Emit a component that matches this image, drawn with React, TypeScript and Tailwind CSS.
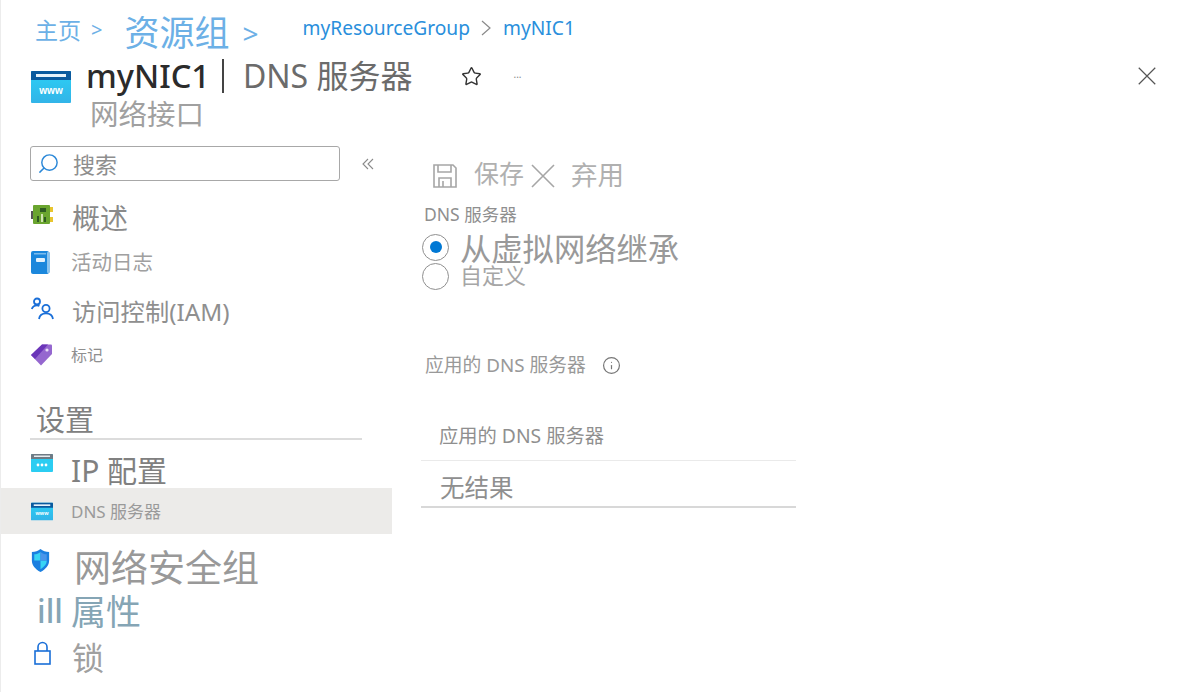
import { Info, Search, Star } from 'lucide-react'

const font = "font-['Noto_Sans','Noto_Sans_CJK_SC',sans-serif]"

function WwwIcon({ className }: { className: string }) {
  return (
    <svg className={className} viewBox="0 0 40 32">
      <defs>
        <linearGradient id="www" x1="0" y1="0" x2="0" y2="1">
          <stop offset="0" stopColor="#2bd0f5" />
          <stop offset="1" stopColor="#32b4e8" />
        </linearGradient>
      </defs>
      <rect width="40" height="32" rx="1" fill="url(#www)" />
      <path d="M0 1a1 1 0 0 1 1-1h38a1 1 0 0 1 1 1v8H0z" fill="#0a5a9e" />
      <rect x="5" y="3" width="30" height="3" fill="#e6f2fa" />
      <text x="20" y="23" textAnchor="middle" fontSize="10" fontWeight="600" fill="#fff" fontFamily="Liberation Sans">www</text>
    </svg>
  )
}

function IpIcon() {
  return (
    <svg className="w-[22px] h-[18px] mb-[16px]" viewBox="0 0 22 18">
      <rect width="22" height="18" rx="1" fill="#2bcdf2" />
      <path d="M0 1a1 1 0 0 1 1-1h20a1 1 0 0 1 1 1v4H0z" fill="#6f7b85" />
      <rect x="3" y="1.5" width="16" height="1.5" fill="#e8edf0" />
      <circle cx="7" cy="11" r="1.4" fill="#fff" />
      <circle cx="11" cy="11" r="1.4" fill="#fff" />
      <circle cx="15" cy="11" r="1.4" fill="#fff" />
    </svg>
  )
}

function BoardIcon() {
  return (
    <svg className="w-[22px] h-[20px] mb-[6px]" viewBox="0 0 22 20">
      <rect x="0" y="6" width="3" height="8" fill="#555" />
      <rect x="2" y="0" width="17" height="19" rx="1" fill="#6aa52f" />
      <rect x="19" y="2" width="3" height="5" fill="#e8c52e" />
      <rect x="19" y="12" width="3" height="5" fill="#e8c52e" />
      <rect x="9" y="3" width="6" height="4" fill="#2f5b22" />
      <rect x="6" y="11" width="2" height="6" fill="#2f5b22" />
      <rect x="10" y="9" width="2" height="8" fill="#cfe3b0" />
      <rect x="13" y="12" width="2" height="5" fill="#2f5b22" />
    </svg>
  )
}

function BookIcon() {
  return (
    <svg className="w-[20px] h-[23px]" viewBox="0 0 20 23">
      <rect width="18" height="23" rx="2" fill="#1b87dc" />
      <rect x="16" y="1" width="3" height="21" rx="1" fill="#8cc4ee" />
      <rect x="3" y="2" width="12" height="1.5" fill="#7cbcec" />
      <rect x="5" y="7" width="9" height="4" rx="1" fill="#e4f2fc" />
    </svg>
  )
}

function UsersIcon() {
  return (
    <svg className="w-[23px] h-[24px] mb-[6px]" viewBox="0 0 23 23" fill="none" stroke="#1a6fd8" strokeWidth="1.8">
      <circle cx="6" cy="4" r="3" />
      <path d="M0.8 11.5c1-2.6 3-3.6 5.2-3.6 1 0 1.6 0.1 2.4 0.5" />
      <circle cx="15" cy="11" r="3.6" />
      <path d="M8 21.500c0.600-3.600 3.400-5.600 7-5.600s6.400 2 7 5.600" />
    </svg>
  )
}

function TagIcon() {
  return (
    <svg className="w-[21px] h-[22px] mb-[1px]" viewBox="0 0 21 22">
      <path d="M0 11 11 0.5h9a1 1 0 0 1 1 1V10L10 21.5z" fill="#9567cf" />
      <path d="M0 11 11 0.5h6L4 15z" fill="#6a35b8" />
      <circle cx="16" cy="6" r="1.6" fill="#e6dcf5" />
    </svg>
  )
}

function ShieldIcon() {
  return (
    <svg className="w-[19px] h-[23px] mb-[14px]" viewBox="0 0 19 24">
      <path d="M9.500 0c2.500 2 5.500 3 9 3v9c0 5-3.500 9-9 12-5.500-3-9-7-9-12V3c3.500 0 6.500-1 9-3z" fill="#1b7fe0" />
      <path d="M9.500 3v9H3V5.500c2.500 0 4.500-1 6.500-2.500z" fill="#38d4f5" />
      <path d="M9.500 12h6.500c0 4-2.500 6.500-6.500 9z" fill="#38d4f5" />
      <path d="M9.500 3c2 1.500 4 2.500 6.500 2.500V12H9.500z" fill="#4a95ea" />
    </svg>
  )
}

function LockIcon() {
  return (
    <svg className="ml-[3px] w-[17px] h-[24px] mb-[10px]" viewBox="0 0 17 24" fill="none" stroke="#1a6fd8" strokeWidth="1.600">
      <rect x="1" y="10" width="15" height="13" />
      <path d="M4 10V6a4.500 4.500 0 0 1 9 0v4" />
    </svg>
  )
}

function SaveIcon() {
  return (
    <svg className="w-[24px] h-[24px]" viewBox="0 0 24 24" fill="none" stroke="#a6a6a6" strokeWidth="1.6">
      <path d="M1 1h19l3 3v19H1z" />
      <path d="M5 1v7h13V1" />
      <path d="M6 23v-9h12v9" />
      <path d="M10 17v6" />
    </svg>
  )
}

function CloseIcon({ className, color }: { className: string; color: string }) {
  return (
    <svg className={className} viewBox="0 0 24 24" fill="none" stroke={color} strokeWidth="1.600">
      <path d="M1 1l22 22M23 1 1 23" />
    </svg>
  )
}

function Row({ icon, className, children }: { icon: React.ReactNode; className: string; children: React.ReactNode }) {
  return (
    <div className={`flex items-center pl-[30px] ${className}`}>
      <div className="w-[40px] shrink-0 flex items-center">{icon}</div>
      {children}
    </div>
  )
}

function Radio({ checked }: { checked?: boolean }) {
  return (
    <div className="w-[27px] h-[27px] rounded-full border-[1.5px] border-[#8f8f8f] flex items-center justify-center shrink-0">
      {checked && <div className="w-[12px] h-[12px] rounded-full bg-[#0078d4]" />}
    </div>
  )
}

export default function App() {
  return (
    <div className={`w-[1200px] h-[692px] overflow-hidden bg-white border-l border-[#ececec] ${font}`}>
      {/* Breadcrumb */}
      <div className="h-[60px] flex items-center pl-[34px] text-[#6cb0e6]">
        <span className="text-[23px] leading-none">主页</span>
        <span className="ml-[10px] text-[20px] leading-none">&gt;</span>
        <span className="ml-[22px] mt-[5px] text-[35px] leading-none">资源组</span>
        <span className="ml-[13px] mt-[5px] text-[28px] leading-none">&gt;</span>
        <span className="ml-[44px] mb-[4px] text-[19.200px] leading-none text-[#2a8fdc]">myResourceGroup</span>
        <svg className="ml-[11px] mb-[4px] w-[10px] h-[16px]" viewBox="0 0 10 16" fill="none" stroke="#8a8a8a" strokeWidth="1.2">
          <path d="M1 1l8 7-8 7" />
        </svg>
        <span className="ml-[12px] mb-[4px] text-[19.200px] leading-none text-[#2a8fdc]">myNIC1</span>
      </div>

      {/* Title */}
      <div className="flex h-[76px] pl-[30px]">
        <WwwIcon className="w-[40px] h-[32px] mt-[11px] shrink-0" />
        <div className="ml-[15px] flex-1">
          <div className="h-[32px] flex items-center pr-[44px]">
            <span className="text-[32.500px] leading-none font-medium text-[#2b2b2b]">myNIC1</span>
            <div className="ml-[12px] w-[2px] h-[34px] bg-[#444]" />
            <span className="ml-[19px] text-[32px] leading-none text-[#6b6b6b]">DNS 服务器</span>
            <Star className="ml-[49px] w-[21px] h-[21px] text-[#333]" strokeWidth={1.6} />
            <span className="ml-[31px] text-[10px] leading-none text-[#888] mb-[4px]">...</span>
            <CloseIcon className="ml-auto w-[18px] h-[18px]" color="#555" />
          </div>
          <div className="h-[44px] flex items-center pl-[4px] text-[28.500px] leading-none text-[#a0a0a0]">网络接口</div>
        </div>
      </div>

      <div className="flex">
        {/* Sidebar */}
        <div className="w-[391px] shrink-0 pt-[10px]">
          <div className="flex items-center pl-[29px]">
            <div className="w-[310px] h-[35px] rounded-[3px] border border-[#a8a8a8] flex items-center pl-[6px]">
              <Search className="w-[23px] h-[23px] -scale-x-100 text-[#2b88d8]" strokeWidth={1.5} />
              <span className="ml-[13px] text-[22px] leading-none text-[#8e8e8e]">搜索</span>
            </div>
            <svg className="ml-[22px] w-[12px] h-[12px]" viewBox="0 0 12 12" fill="none" stroke="#8a8a8a" strokeWidth="1.1">
              <path d="M6 1 1 6l5 5M11 1 6 6l5 5" />
            </svg>
          </div>

          <Row className="h-[44px] mt-[15px]" icon={<BoardIcon />}>
            <span className="ml-[1px] text-[28px] leading-none text-[#8a8a8a]">概述</span>
          </Row>
          <Row className="h-[44px]" icon={<BookIcon />}>
            <span className="text-[20.500px] leading-none text-[#a0a0a0]">活动日志</span>
          </Row>
          <Row className="h-[56px]" icon={<UsersIcon />}>
            <span className="ml-[1px] text-[24.300px] leading-none text-[#8f8f8f]">访问控制(IAM)</span>
          </Row>
          <Row className="h-[30px]" icon={<TagIcon />}>
            <span className="text-[16px] leading-none text-[#8f8f8f]">标记</span>
          </Row>

          <div className="ml-[29px] w-[332px] h-[40px] mt-[30px] border-b-2 border-[#dcdcdc] flex items-center pl-[6px] text-[29px] leading-none text-[#808080]">设置</div>

          <Row className="h-[34px] mt-[14px]" icon={<IpIcon />}>
            <span className="text-[30px] leading-none text-[#808080]">IP 配置</span>
          </Row>
          <Row className="h-[46px] bg-[#ecebe9]" icon={<WwwIcon className="w-[22px] h-[19px]" />}>
            <span className="text-[17px] leading-none text-[#9a9a9a]">DNS 服务器</span>
          </Row>
          <Row className="h-[46px] mt-[10px]" icon={<ShieldIcon />}>
            <span className="ml-[3px] text-[37px] leading-none text-[#999]">网络安全组</span>
          </Row>
          <Row className="h-[42px]" icon={<span className="ml-[6px] text-[32px] leading-none font-medium text-[#85a5b5]">ill</span>}>
            <span className="text-[35px] leading-none text-[#85a5b5]">属性</span>
          </Row>
          <Row className="h-[52px]" icon={<LockIcon />}>
            <span className="ml-[1px] text-[32px] leading-none text-[#a0a0a0]">锁</span>
          </Row>
        </div>

        {/* Content */}
        <div className="flex-1 pl-[29px] pt-[20px]">
          <div className="h-[40px] flex items-center pl-[12px]">
            <SaveIcon />
            <span className="ml-[17px] mb-[6px] text-[25px] leading-none text-[#b0b0b0]">保存</span>
            <CloseIcon className="ml-[7px] w-[24px] h-[24px]" color="#a6a6a6" />
            <span className="ml-[16px] mb-[2px] text-[26.500px] leading-none text-[#b0b0b0]">弃用</span>
          </div>
          <div className="h-[20px] mt-[9px] ml-[3px] flex items-center text-[17.500px] leading-none text-[#8f8f8f]">DNS 服务器</div>
          <div className="h-[26px] mt-[9px] ml-[1px] flex items-center">
            <Radio checked />
            <span className="ml-[11px] mt-[5px] text-[31.300px] leading-none text-[#999] whitespace-nowrap">从虚拟网络继承</span>
          </div>
          <div className="h-[27px] mt-[3px] ml-[1px] flex items-center">
            <Radio />
            <span className="ml-[11px] mb-[4px] text-[22px] leading-none text-[#a6a6a6]">自定义</span>
          </div>
          <div className="h-[20px] mt-[65px] ml-[4px] flex items-center text-[18.800px] leading-none text-[#999]">
            应用的 DNS 服务器
            <Info className="ml-[16px] w-[19px] h-[19px] text-[#777]" strokeWidth={1.5} />
          </div>
          <div className="w-[375px] mt-[37px]">
            <div className="h-[49px] pl-[18px] flex items-center border-b border-[#eaeaea] text-[19.300px] leading-none text-[#8f8f8f]">应用的 DNS 服务器</div>
            <div className="h-[47px] pl-[19px] pt-[10px] flex items-center border-b-2 border-[#d8d8d8] text-[24.500px] leading-none text-[#8f8f8f]">无结果</div>
          </div>
        </div>
      </div>
    </div>
  )
}
